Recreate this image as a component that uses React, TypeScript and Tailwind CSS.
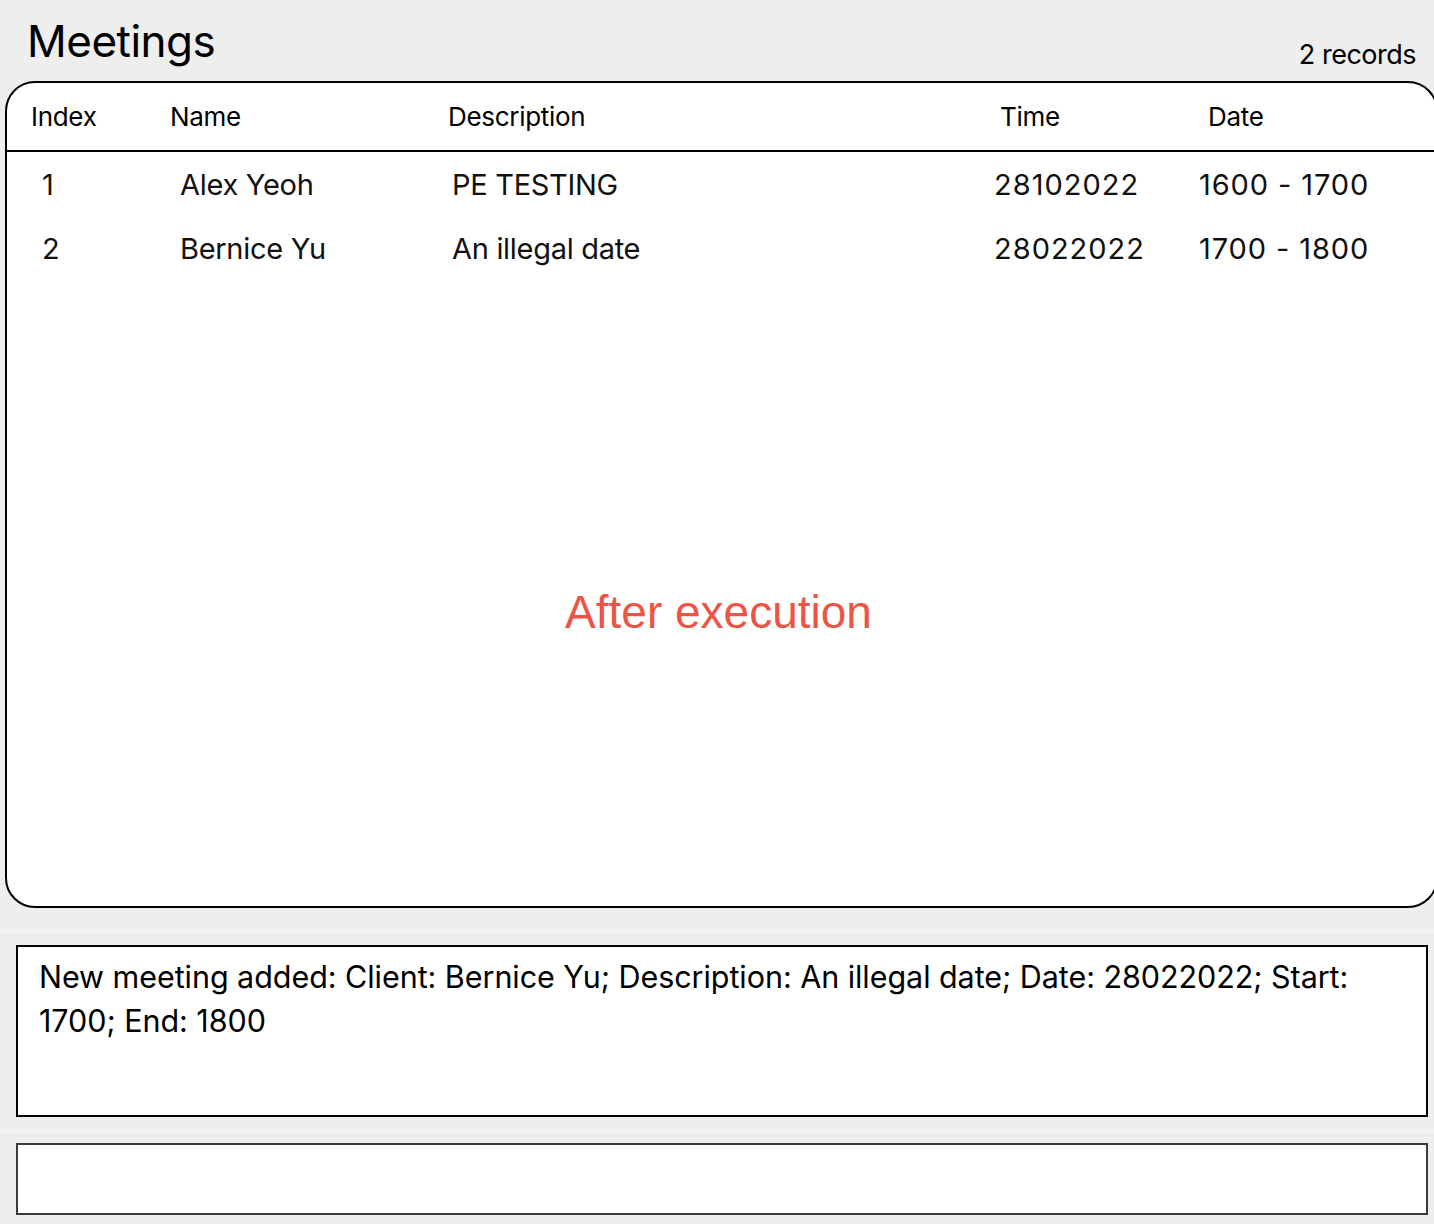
import React from "react";

const rows = [
  { i: "1", name: "Alex Yeoh", desc: "PE TESTING", time: "28102022", date: "1600 - 1700" },
  { i: "2", name: "Bernice Yu", desc: "An illegal date", time: "28022022", date: "1700 - 1800" },
];

export default function App() {
  return (
    <div
      className="w-[1434px] h-[1224px] overflow-hidden bg-[#eeeeee] text-black flex flex-col"
      style={{ fontFamily: "Inter, 'Noto Sans', sans-serif" }}
    >
      <div className="h-[81px] flex items-start justify-between pl-[27px] pr-[18px] shrink-0">
        <div className="text-[44px] leading-none mt-[19px] tracking-[-0.5px]">Meetings</div>
        <div className="text-[27px] leading-none mt-[41px] tracking-[-0.5px]">2 records</div>
      </div>
      <div className="ml-[5px] w-[1433px] h-[827px] shrink-0 bg-white border-2 border-black rounded-[30px] flex flex-col">
        <div className="h-[69px] border-b-2 border-black flex items-center text-[26px] tracking-[-0.3px] shrink-0">
          <div className="w-[163px] pl-[24px]">Index</div>
          <div className="w-[278px]">Name</div>
          <div className="w-[552px]">Description</div>
          <div className="w-[208px]">Time</div>
          <div>Date</div>
        </div>
        <div className="pt-[1px]">
          {rows.map((r) => (
            <div key={r.i} className="h-[64px] flex items-center text-[29px] text-[#111] tracking-[-0.3px]">
              <div className="w-[173px] pl-[35px]">{r.i}</div>
              <div className="w-[272px]">{r.name}</div>
              <div className="w-[542px]">{r.desc}</div>
              <div className="w-[205px] tracking-[1px]">{r.time}</div>
              <div className="tracking-[0.9px]">{r.date}</div>
            </div>
          ))}
        </div>
        <div className="flex-1 flex items-start justify-center">
          <div
            className="text-[46px] leading-none text-[#ec5446] mt-[308px] mr-[6px]"
            style={{ fontFamily: "'Liberation Sans', Arial, sans-serif" }}
          >
            After execution
          </div>
        </div>
      </div>
      <div className="h-[21px] shrink-0" />
      <div className="h-[4px] bg-[#f3f3f3] shrink-0" />
      <div className="h-[12px] shrink-0" />
      <div className="ml-[16px] w-[1412px] h-[172px] shrink-0 bg-white border-2 border-black px-[21px] pt-[8px] text-[30.5px] leading-[44px] tracking-[-0.05px]">
        New meeting added: Client: Bernice Yu; Description: An illegal date; Date: 28022022; Start: 1700; End: 1800
      </div>
      <div className="h-[12px] shrink-0" />
      <div className="h-[4px] bg-[#f3f3f3] shrink-0" />
      <div className="h-[10px] shrink-0" />
      <div className="ml-[16px] w-[1412px] h-[72px] shrink-0 bg-white border-2 border-[#3a3a3a]" />
    </div>
  );
}
